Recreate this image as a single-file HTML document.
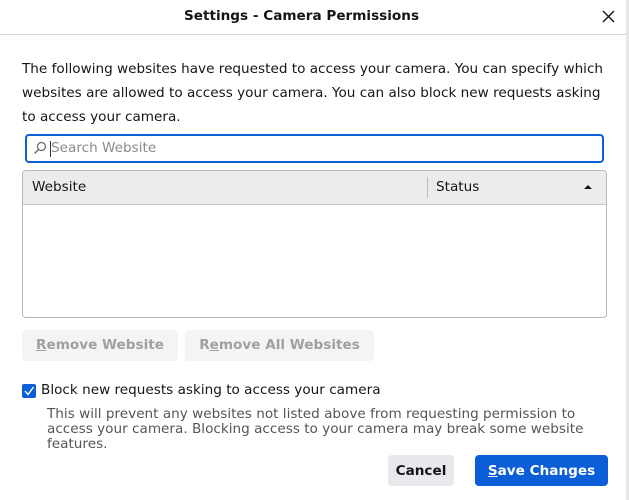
<!DOCTYPE html>
<html><head><style>
*{margin:0;padding:0;box-sizing:border-box}
body{width:629px;height:500px;background:#fff;font-family:"DejaVu Sans","Liberation Sans",sans-serif;font-size:13.6px;color:#15141a;position:relative;overflow:hidden}
.a{position:absolute;white-space:nowrap}
.btn{position:absolute;border-radius:4px;font-weight:bold;text-align:center;font-size:13.6px}
</style></head><body>
<div style="position:absolute;right:0;top:0;width:3px;height:500px;background:#e6e6e6"></div>
<div class="a" style="left:0;width:603px;top:8px;text-align:center;font-weight:bold;font-size:13.6px">Settings - Camera Permissions</div>
<svg class="a" style="left:602px;top:10px" width="13" height="13"><path d="M1 1L12 12M12 1L1 12" stroke="#15141a" stroke-width="1.4"/></svg>
<div class="a" style="left:0;top:34px;width:626px;height:1px;background:#d8d8d8"></div>
<div class="a" style="left:22px;top:57px;line-height:24px">The following websites have requested to access your camera. You can specify which<br>websites are allowed to access your camera. You can also block new requests asking<br>to access your camera.</div>
<div class="a" style="left:25px;top:134px;width:579px;height:29px;border:2px solid #0b5ed7;border-radius:4px"></div>
<svg class="a" style="left:33px;top:141px" width="14" height="14"><circle cx="8.5" cy="5.5" r="4" fill="none" stroke="#666" stroke-width="1.2"/><path d="M5.5 8.5L1.5 12.5" stroke="#666" stroke-width="1.3"/></svg>
<div class="a" style="left:50px;top:141px;width:1px;height:16px;background:#333"></div>
<div class="a" style="left:51px;top:140px;color:#8a8a8a">Search Website</div>
<div class="a" style="left:22px;top:170px;width:585px;height:148px;border:1px solid #b8b8b8;border-radius:4px;overflow:hidden">
<div style="height:34px;background:#ececec;border-bottom:1px solid #c8c8c8;position:relative">
<div class="a" style="left:9px;top:8px">Website</div>
<div class="a" style="left:404px;top:6px;width:1px;height:21px;background:#bbb"></div>
<div class="a" style="left:413px;top:8px">Status</div>
<svg class="a" style="left:561px;top:13px" width="8" height="6"><path d="M0 5L4 1L8 5Z" fill="#15141a"/></svg>
</div></div>
<div class="btn" style="left:22px;top:330px;width:156px;height:31px;line-height:31px;background:#f4f4f4;color:#a0a0a0"><u>R</u>emove Website</div>
<div class="btn" style="left:185px;top:330px;width:189px;height:31px;line-height:31px;background:#f4f4f4;color:#a0a0a0">R<u>e</u>move All Websites</div>
<div class="a" style="left:22px;top:384px;width:14px;height:14px;background:#0b5ed7;border-radius:2px"></div>
<svg class="a" style="left:23px;top:385px" width="12" height="12"><path d="M2 6L5 9.5L10.5 2" fill="none" stroke="#fff" stroke-width="1.4"/></svg>
<div class="a" style="left:41px;top:382px">Block new requests asking to access your camera</div>
<div class="a" style="left:47px;top:407px;line-height:15px;color:#555">This will prevent any websites not listed above from requesting permission to<br>access your camera. Blocking access to your camera may break some website<br>features.</div>
<div class="btn" style="left:388px;top:455px;width:66px;height:31px;line-height:32px;background:#e9e9ed">Cancel</div>
<div class="btn" style="left:475px;top:455px;width:133px;height:31px;line-height:32px;background:#0b5ed7;color:#fff"><u>S</u>ave Changes</div>
</body></html>
